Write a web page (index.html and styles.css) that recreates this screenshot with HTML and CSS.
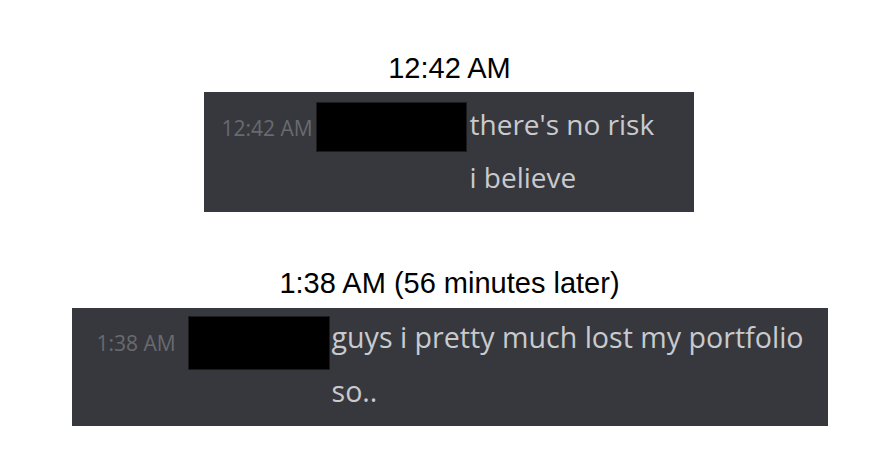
FILE: index.html
```html
<!DOCTYPE html>
<html lang="en">
<head>
    <meta charset="UTF-8">
    <meta name="viewport" content="width=device-width, initial-scale=1.0">
    <title>56 minutes later</title>
    <link rel="stylesheet" href="styles.css">
</head>
<body>

    <main>
        <h2 class="label">12:42 AM</h2>
        <div class="chat chat-early">
            <span class="time">12:42 AM</span>
            <div class="redact"></div>
            <div class="lines">
                <p>there's no risk</p>
                <p>i believe</p>
            </div>
        </div>

        <h2 class="label label-late">1:38 AM (56 minutes later)</h2>
        <div class="chat chat-late">
            <span class="time">1:38 AM</span>
            <div class="redact"></div>
            <div class="lines">
                <p>guys i pretty much lost my portfolio</p>
                <p>so..</p>
            </div>
        </div>
    </main>

</body>
</html>
```

FILE: styles.css
```css
*{margin: 0; padding: 0; box-sizing: border-box;}
body{background-color: #fff; font-family: "Open Sans", "Noto Sans", sans-serif;}
main{width: 880px; padding: 52px 0 0 19px; display: flex; flex-direction: column; align-items: center;}

/* captions above each screenshot */
.label{font-family: "Liberation Sans", Arial, sans-serif; font-weight: normal; font-size: 29px; line-height: 33px; color: #000; text-align: center;}
.label-late{margin-top: 55px;}

/* discord-like message block */
.chat{display: flex; align-items: flex-start; background-color: #37383d; color: #c9cacd; font-size: 28px;}
.time{flex: none; font-size: 21px; color: #686a6f; white-space: nowrap;}
.redact{flex: none; background-color: #000; border: 1px solid #1c1c1f;}
.lines p{white-space: nowrap;}

.chat-early{width: 490px; height: 120px; margin: 7px 2px 0 0; padding: 6px 0 8px 0;}
.chat-early .time{width: 112px; padding-left: 18px; margin-top: 4px; line-height: 53px;}
.chat-early .redact{width: 151px; height: 50px; margin: 4px 3px 0 0;}
.chat-early .lines p{line-height: 53px;}

.chat-late{width: 756px; height: 118px; margin-top: 8px; padding: 2px 0 8px 0; font-size: 28.6px;}
.chat-late .time{width: 116px; padding-left: 25px; margin-top: 6px; line-height: 54px;}
.chat-late .redact{width: 142px; height: 54px; margin: 6px 2px 0 0;}
.chat-late .lines p{line-height: 54px;}
```
